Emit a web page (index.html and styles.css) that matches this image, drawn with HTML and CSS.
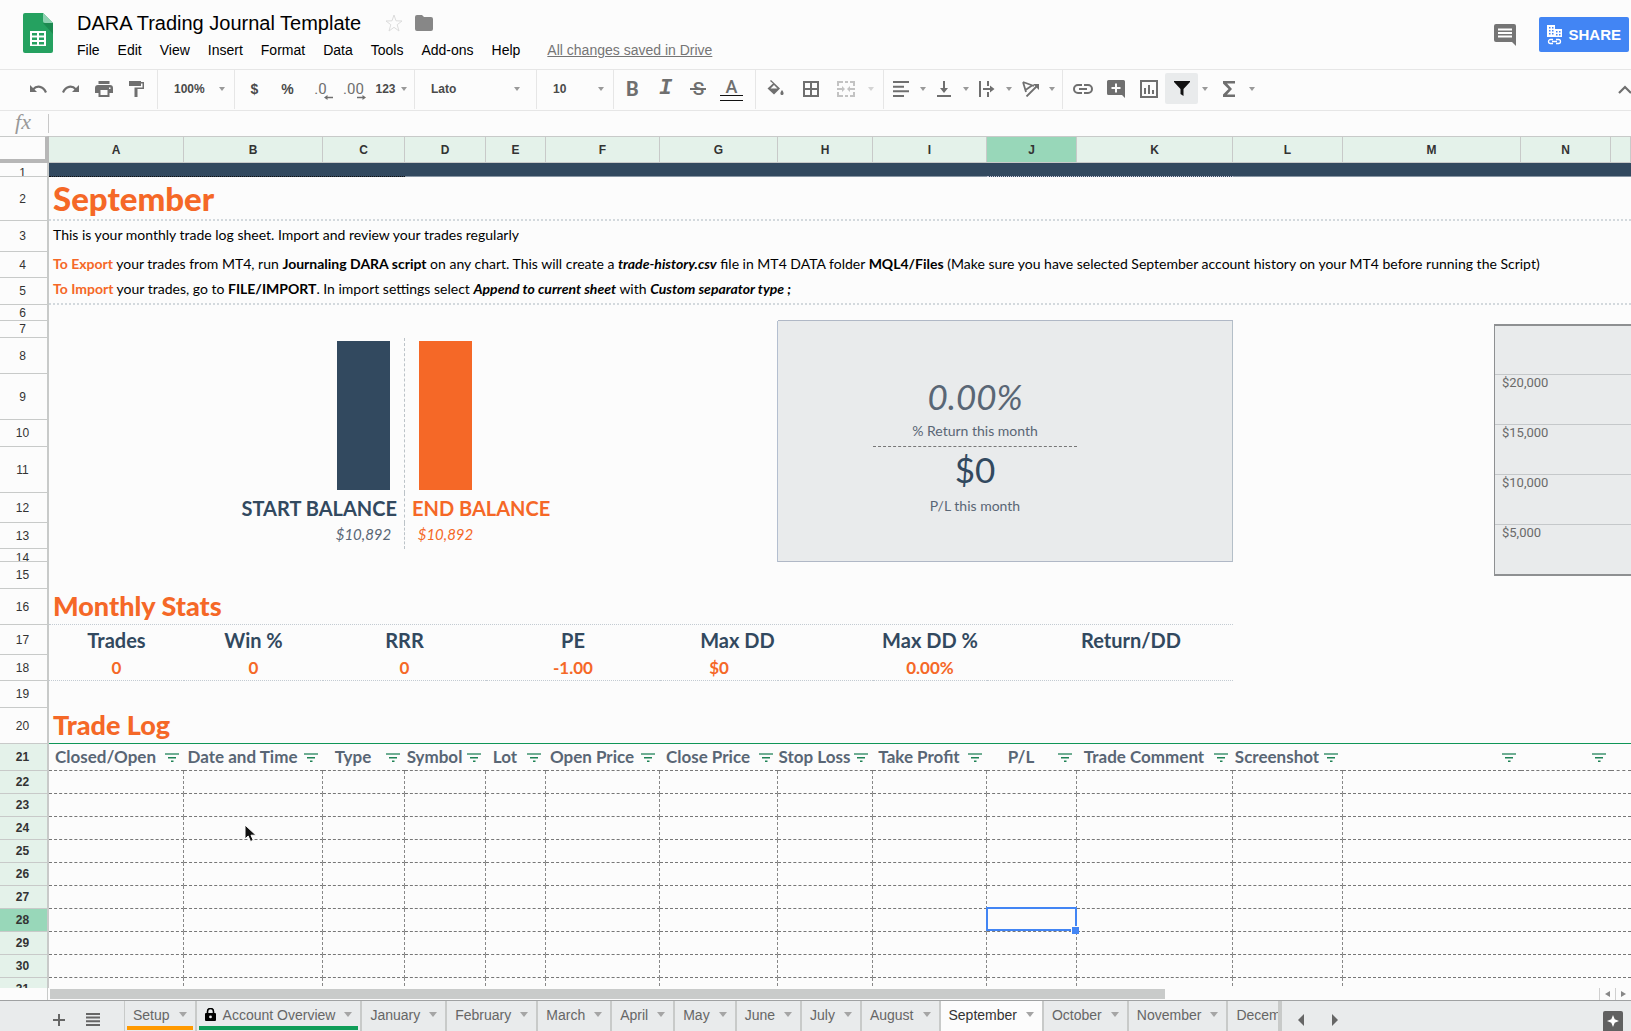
FILE: index.html
```html
<!DOCTYPE html>
<html lang="en">
<head>
  <meta charset="UTF-8">
  <title>DARA Trading Journal Template</title>
  <link rel="stylesheet" href="styles.css">
</head>
<body>
  <svg class="sprite" width="0" height="0" aria-hidden="true">
    <symbol id="i-filter" viewBox="0 0 14 10"><path d="M0 0h14v2H0z" fill="#6fae93"/><path d="M3 4h8v1.500H3zM6 7.500h2.500v1.500H6z" fill="#1f8255"/></symbol>
  </svg>

  <header class="header">
    <svg class="logo" width="30" height="40" viewBox="0 0 30 40">
      <path d="M2 0h18l10 10v28a2 2 0 0 1-2 2H2a2 2 0 0 1-2-2V2a2 2 0 0 1 2-2z" fill="#25a160"/>
      <path d="M20 10h10v11z" fill="#1c8a50"/>
      <path d="M20 0l10 10H22a2 2 0 0 1-2-2z" fill="#8ed1b1"/>
      <path d="M7 18h16v15H7z" fill="#fff"/>
      <path d="M9 20h5v2.500H9zM16 20h5v2.500h-5zM9 24.500h5v2.500H9zM16 24.500h5v2.500h-5zM9 29h5v2.500H9zM16 29h5v2.500h-5z" fill="#25a160"/>
    </svg>
    <div class="doc">
      <div class="doc-title">
        <h1>DARA Trading Journal Template</h1>
        <button class="icon-btn" aria-label="Star"><svg width="18" height="18" viewBox="0 0 18 18"><path d="M9 1l2 5.800 6 .2-4.800 3.700L14 17l-5-3.700L4 17l1.800-6.300L1 7l6-.2z" fill="none" stroke="#dcdcdc"/></svg></button>
        <button class="icon-btn" aria-label="Move to folder"><svg width="18" height="16" viewBox="0 0 18 16"><path d="M2 0h5l2 2h7a2 2 0 0 1 2 2v10a2 2 0 0 1-2 2H2a2 2 0 0 1-2-2V2a2 2 0 0 1 2-2z" fill="#878787"/></svg></button>
      </div>
      <nav class="menu">
        <button>File</button>
        <button>Edit</button>
        <button>View</button>
        <button>Insert</button>
        <button>Format</button>
        <button>Data</button>
        <button>Tools</button>
        <button>Add-ons</button>
        <button>Help</button>
        <a href="#" class="save-status">All changes saved in Drive</a>
      </nav>
    </div>
    <div class="header-actions">
      <button class="icon-btn" aria-label="Comments"><svg width="22" height="22" viewBox="0 0 22 22"><path d="M2 0h18a2 2 0 0 1 2 2v20l-4-4H2a2 2 0 0 1-2-2V2a2 2 0 0 1 2-2z" fill="#757575"/><path d="M4 4.500h14v2H4zM4 8h14v2H4zM4 11.500h14v2H4z" fill="#fff"/></svg></button>
      <button class="share-btn">
        <svg width="15" height="20" viewBox="0 0 15 20"><path d="M0 0h8v4h7v8H0z" fill="#fff"/><path d="M2 2h1.500v1.500H2zM5 2h1.500v1.500H5zM2 5h1.500v1.500H2zM5 5h1.500v1.500H5zM2 8h1.500v1.500H2zM5 8h1.500v1.500H5zM9 6h1.500v1.500H9zM12 6h1.500v1.500H12zM9 9h1.500v1.500H9zM12 9h1.500v1.500H12z" fill="#4285f4"/><path d="M6 14.500H3.500a2 2 0 0 0 0 4H6M9 14.500h2.500a2 2 0 0 1 0 4H9M5 16.500h5" fill="none" stroke="#fff" stroke-width="1.300"/></svg>
        SHARE
      </button>
    </div>
  </header>

  <div class="toolbar">
    <div class="tool-group tool-group-first">
      <button class="tool" aria-label="Undo"><svg width="18" height="10" viewBox="0 0 18 10"><path d="M1 1v7h7z"/><path d="M4 5.500C8 1 14 2 17 8.500" fill="none" stroke="currentColor" stroke-width="2.200"/></svg></button>
      <button class="tool" aria-label="Redo"><svg width="18" height="10" viewBox="0 0 18 10"><path d="M17 1v7h-7z"/><path d="M14 5.500C10 1 4 2 1 8.500" fill="none" stroke="currentColor" stroke-width="2.200"/></svg></button>
      <button class="tool" aria-label="Print"><svg width="18" height="16" viewBox="0 0 18 16"><path d="M3.500 0h11v3h-11zM3 4h12a3 3 0 0 1 3 3v5h-3.500v4h-11v-4H0V7a3 3 0 0 1 3-3zm2.500 5v5h7V9zM14 6.500v1.500h1.500V6.500z" fill-rule="evenodd"/></svg></button>
      <button class="tool" aria-label="Paint format"><svg width="16" height="16" viewBox="0 0 16 16"><path d="M0 0h12v5H0zM12 1h3v7H8.500v8h-3V6.500h8v-4H12z"/></svg></button>
    </div>
    <div class="tool-group">
      <label class="picker picker-zoom"><select aria-label="Zoom"><option>100%</option></select></label>
    </div>
    <div class="tool-group tool-group-number">
      <button class="tool tool-text">$</button>
      <button class="tool tool-text">%</button>
      <button class="tool tool-decimal">.0<svg width="9" height="5" viewBox="0 0 9 5"><path d="M0 2.500L3.500 0v1.700H9v1.600H3.500V5z"/></svg></button>
      <button class="tool tool-decimal">.00<svg width="9" height="5" viewBox="0 0 9 5"><path d="M9 2.500L5.500 0v1.700H0v1.600h5.500V5z"/></svg></button>
      <button class="tool tool-format">123<span class="caret"></span></button>
    </div>
    <div class="tool-group">
      <label class="picker picker-font"><select aria-label="Font"><option>Lato</option></select></label>
    </div>
    <div class="tool-group">
      <label class="picker picker-size"><select aria-label="Font size"><option>10</option></select></label>
    </div>
    <div class="tool-group tool-group-text">
      <button class="tool tool-bold" aria-label="Bold">B</button>
      <button class="tool tool-italic" aria-label="Italic">I</button>
      <button class="tool tool-strike" aria-label="Strikethrough">S</button>
      <button class="tool tool-color" aria-label="Text color">A</button>
    </div>
    <div class="tool-group tool-group-cell">
      <button class="tool" aria-label="Fill color"><svg width="17" height="17" viewBox="0 0 17 17"><path d="M4 0l9 8.500-6 6-6.500-6L6 3.500 3 1zM7 5L3.500 8.500h7zM15 10c3 4 1 5 0 5s-3-1 0-5z" fill-rule="evenodd"/></svg></button>
      <button class="tool" aria-label="Borders"><svg width="16" height="16" viewBox="0 0 16 16"><path d="M1 1h14v14H1zM8 1v14M1 8h14" fill="none" stroke="currentColor" stroke-width="2"/></svg></button>
      <button class="tool tool-off" aria-label="Merge cells" disabled><svg width="18" height="16" viewBox="0 0 18 16"><path d="M1 5V1h5M8 1h3M13 1h4v4M1 11v4h5M8 15h3M13 15h4v-4M0 8h6M18 8h-6" fill="none" stroke="currentColor" stroke-width="2"/><path d="M5 5l3 3-3 3zM13 5l-3 3 3 3z"/></svg></button>
      <span class="tool-caret tool-off"><span class="caret"></span></span>
    </div>
    <div class="tool-group tool-group-align">
      <button class="tool" aria-label="Horizontal align"><svg width="16" height="16" viewBox="0 0 16 16"><path d="M0 0h16v2H0zM0 4.700h11v2H0zM0 9.300h16v2H0zM0 14h11v2H0z"/></svg></button>
      <span class="tool-caret"><span class="caret"></span></span>
      <button class="tool" aria-label="Vertical align"><svg width="14" height="16" viewBox="0 0 14 16"><path d="M6 0h2v7h3l-4 5-4-5h3zM0 14h14v2H0z"/></svg></button>
      <span class="tool-caret"><span class="caret"></span></span>
      <button class="tool" aria-label="Text wrapping"><svg width="16" height="16" viewBox="0 0 16 16"><path d="M0 0h2v16H0zM8 0h2v5H8zM8 11h2v5H8zM4 7h7V4.500L15.500 8 11 11.500V9H4z"/></svg></button>
      <span class="tool-caret"><span class="caret"></span></span>
      <button class="tool" aria-label="Text rotation"><svg width="17" height="16" viewBox="0 0 17 16"><path d="M1 1l11 4M1 1l3 10M10 4.500L3.500 9M4.500 15.500L15 5" fill="none" stroke="currentColor" stroke-width="1.800"/><path d="M17 3v6l-6-6z"/></svg></button>
      <span class="tool-caret"><span class="caret"></span></span>
    </div>
    <div class="tool-group tool-group-insert">
      <button class="tool" aria-label="Insert link"><svg width="20" height="10" viewBox="0 0 20 10"><path d="M9 1H5a4 4 0 0 0 0 8h4M11 1h4a4 4 0 0 1 0 8h-4M6 5h8" fill="none" stroke="currentColor" stroke-width="2"/></svg></button>
      <button class="tool" aria-label="Insert comment"><svg width="18" height="18" viewBox="0 0 18 18"><path d="M1.500 0h15A1.500 1.500 0 0 1 18 1.500V18l-3-3H1.500A1.500 1.500 0 0 1 0 13.500v-12A1.500 1.500 0 0 1 1.500 0zM8 3.500V7H4.500v2H8v3.500h2V9h3.500V7H10V3.500z" fill-rule="evenodd"/></svg></button>
      <button class="tool" aria-label="Insert chart"><svg width="18" height="18" viewBox="0 0 18 18"><path d="M1 1h16v16H1z" fill="none" stroke="currentColor" stroke-width="2"/><path d="M4 8h2v6H4zM8 5h2v9H8zM12 10h2v4h-2z"/></svg></button>
      <button class="tool tool-active" aria-label="Filter"><svg width="16" height="15" viewBox="0 0 16 15"><path d="M0 0h16v1L9.500 8v7L6.500 13V8L0 1z"/></svg></button>
      <span class="tool-caret"><span class="caret"></span></span>
      <button class="tool" aria-label="Functions"><svg width="12" height="16" viewBox="0 0 12 16"><path d="M0 0h12v2.500H4L9 8l-5 5.500h8V16H0v-2.500L5.500 8 0 2.500z"/></svg></button>
      <span class="tool-caret"><span class="caret"></span></span>
    </div>
    <button class="tool tool-collapse" aria-label="Hide menus"><svg width="14" height="9" viewBox="0 0 14 9"><path d="M1 8l6-6 6 6" fill="none" stroke="currentColor" stroke-width="2.200"/></svg></button>
  </div>

  <div class="formula-bar">
    <label for="formula">fx</label>
    <input type="text" id="formula">
  </div>

  <main class="sheet">
    <table class="grid">
      <colgroup>
        <col class="w-head"><col class="w-a"><col class="w-b"><col class="w-c"><col class="w-d"><col class="w-e"><col class="w-f"><col class="w-g"><col class="w-h"><col class="w-i"><col class="w-j"><col class="w-k"><col class="w-l"><col class="w-m"><col class="w-n"><col>
      </colgroup>
      <thead>
        <tr>
          <th class="corner"></th>
          <th>A</th><th>B</th><th>C</th><th>D</th><th>E</th><th>F</th><th>G</th><th>H</th><th>I</th><th class="current">J</th><th>K</th><th>L</th><th>M</th><th>N</th><th></th>
        </tr>
      </thead>
      <tbody>
        <tr class="h-14 banner"><th><span>1</span></th><td class="dots-dark" colspan="3"></td><td colspan="6"></td><td class="dots-light" colspan="2"></td><td colspan="4"></td></tr>
        <tr class="h-44"><th>2</th><td class="title dotted-bottom" colspan="15">September</td></tr>
        <tr class="h-31"><th>3</th><td class="note" colspan="15">This is your monthly trade log sheet. Import and review your trades regularly</td></tr>
        <tr class="h-26"><th>4</th><td class="note" colspan="15"><b class="orange">To Export</b> your trades from MT4, run <b>Journaling DARA script</b> on any chart. This will create a <b><i>trade-history.csv</i></b> file in MT4 DATA folder <b>MQL4/Files</b> (Make sure you have selected September account history on your MT4 before running the Script)</td></tr>
        <tr class="h-27"><th>5</th><td class="note dotted-bottom" colspan="15"><b class="orange">To Import</b> your trades, go to <b>FILE/IMPORT</b>. In import settings select <b><i>Append to current sheet</i></b> with <b><i>Custom separator type ;</i></b></td></tr>
        <tr class="h-16"><th>6</th><td colspan="7"></td><td class="card-edge" colspan="4"></td><td colspan="4"></td></tr>
        <tr class="h-17"><th>7</th><td class="card-left" colspan="7"></td><td class="card" colspan="4"></td><td colspan="4"></td></tr>
        <tr class="h-36"><th>8</th><td colspan="2" rowspan="4"></td><td class="bar-cell split" rowspan="4"><div class="bar bar-start"></div></td><td class="bar-cell" rowspan="4"><div class="bar bar-end"></div></td><td class="card-left" colspan="3"></td><td class="card" colspan="4"></td><td colspan="4"></td></tr>
        <tr class="h-46"><th>9</th><td class="card-left" colspan="3"></td><td class="card-fill"></td><td class="card-fill figure figure-pct" colspan="2">0.00%</td><td class="card"></td><td colspan="4"></td></tr>
        <tr class="h-27"><th>10</th><td class="card-left" colspan="3"></td><td class="card-fill"></td><td class="card-fill caption caption-line" colspan="2">% Return this month</td><td class="card"></td><td colspan="4"></td></tr>
        <tr class="h-46"><th>11</th><td class="card-left" colspan="3"></td><td class="card-fill"></td><td class="card-fill figure" colspan="2">$0</td><td class="card"></td><td colspan="4"></td></tr>
        <tr class="h-30"><th>12</th><td class="balance balance-start split" colspan="3">START BALANCE</td><td class="balance balance-end" colspan="3">END BALANCE</td><td class="card-left"></td><td class="card-fill"></td><td class="card-fill caption" colspan="2">P/L this month</td><td class="card"></td><td colspan="4"></td></tr>
        <tr class="h-26"><th>13</th><td colspan="2"></td><td class="amount split">$10,892</td><td class="amount orange">$10,892</td><td class="card-left" colspan="3"></td><td class="card" colspan="4"></td><td colspan="4"></td></tr>
        <tr class="h-13"><th><span>14</span></th><td class="card-left" colspan="7"></td><td class="card card-last" colspan="4"></td><td colspan="4"></td></tr>
        <tr class="h-27"><th>15</th><td colspan="15"></td></tr>
        <tr class="h-36"><th>16</th><td class="section stats-line" colspan="11">Monthly Stats</td><td colspan="4"></td></tr>
        <tr class="h-30 stat-names"><th>17</th><td>Trades</td><td>Win %</td><td colspan="2">RRR</td><td colspan="2">PE</td><td class="stat-indent">Max DD</td><td></td><td>Max DD %</td><td></td><td class="stat-left">Return/DD</td><td colspan="4"></td></tr>
        <tr class="h-26 stat-values"><th>18</th><td class="stats-line">0</td><td class="stats-line">0</td><td class="stats-line" colspan="2">0</td><td class="stats-line" colspan="2">-1.00</td><td class="stats-line">$0</td><td class="stats-line"></td><td class="stats-line">0.00%</td><td class="stats-line" colspan="2"></td><td colspan="4"></td></tr>
        <tr class="h-27"><th>19</th><td colspan="15"></td></tr>
        <tr class="h-36"><th>20</th><td class="section log-line" colspan="15">Trade Log</td></tr>
        <tr class="h-27 log-head">
          <th>21</th>
          <td><div>Closed/Open<button aria-label="Filter"><svg><use href="#i-filter"/></svg></button></div></td>
          <td><div>Date and Time<button aria-label="Filter"><svg><use href="#i-filter"/></svg></button></div></td>
          <td><div>Type<button aria-label="Filter"><svg><use href="#i-filter"/></svg></button></div></td>
          <td><div>Symbol<button aria-label="Filter"><svg><use href="#i-filter"/></svg></button></div></td>
          <td><div>Lot<button aria-label="Filter"><svg><use href="#i-filter"/></svg></button></div></td>
          <td><div>Open Price<button aria-label="Filter"><svg><use href="#i-filter"/></svg></button></div></td>
          <td><div>Close Price<button aria-label="Filter"><svg><use href="#i-filter"/></svg></button></div></td>
          <td><div>Stop Loss<button aria-label="Filter"><svg><use href="#i-filter"/></svg></button></div></td>
          <td><div>Take Profit<button aria-label="Filter"><svg><use href="#i-filter"/></svg></button></div></td>
          <td><div>P/L<button aria-label="Filter"><svg><use href="#i-filter"/></svg></button></div></td>
          <td><div>Trade Comment<button aria-label="Filter"><svg><use href="#i-filter"/></svg></button></div></td>
          <td><div>Screenshot<button aria-label="Filter"><svg><use href="#i-filter"/></svg></button></div></td>
          <td><div><button aria-label="Filter"><svg><use href="#i-filter"/></svg></button></div></td>
          <td><div><button aria-label="Filter"><svg><use href="#i-filter"/></svg></button></div></td>
          <td></td>
        </tr>
        <tr class="log"><th>22</th><td></td><td></td><td></td><td></td><td></td><td></td><td></td><td></td><td></td><td></td><td></td><td></td><td colspan="3"></td></tr>
        <tr class="log"><th>23</th><td></td><td></td><td></td><td></td><td></td><td></td><td></td><td></td><td></td><td></td><td></td><td></td><td colspan="3"></td></tr>
        <tr class="log"><th>24</th><td></td><td></td><td></td><td></td><td></td><td></td><td></td><td></td><td></td><td></td><td></td><td></td><td colspan="3"></td></tr>
        <tr class="log"><th>25</th><td></td><td></td><td></td><td></td><td></td><td></td><td></td><td></td><td></td><td></td><td></td><td></td><td colspan="3"></td></tr>
        <tr class="log"><th>26</th><td></td><td></td><td></td><td></td><td></td><td></td><td></td><td></td><td></td><td></td><td></td><td></td><td colspan="3"></td></tr>
        <tr class="log"><th>27</th><td></td><td></td><td></td><td></td><td></td><td></td><td></td><td></td><td></td><td></td><td></td><td></td><td colspan="3"></td></tr>
        <tr class="log"><th class="current">28</th><td></td><td></td><td></td><td></td><td></td><td></td><td></td><td></td><td></td><td class="selected"><div class="selection"></div></td><td></td><td></td><td colspan="3"></td></tr>
        <tr class="log"><th>29</th><td></td><td></td><td></td><td></td><td></td><td></td><td></td><td></td><td></td><td></td><td></td><td></td><td colspan="3"></td></tr>
        <tr class="log"><th>30</th><td></td><td></td><td></td><td></td><td></td><td></td><td></td><td></td><td></td><td></td><td></td><td></td><td colspan="3"></td></tr>
        <tr class="log"><th>31</th><td></td><td></td><td></td><td></td><td></td><td></td><td></td><td></td><td></td><td></td><td></td><td></td><td colspan="3"></td></tr>
      </tbody>
    </table>

    <!-- equity chart floats over the cells -->
    <div class="chart">
      <div class="chart-band"></div>
      <div class="chart-band">$20,000</div>
      <div class="chart-band">$15,000</div>
      <div class="chart-band">$10,000</div>
      <div class="chart-band">$5,000</div>
    </div>

    <svg class="pointer" width="13" height="19" viewBox="0 0 13 19"><path d="M1 1v14l3.200-3 2.300 5.500 2.800-1.200-2.300-5.100H12z" fill="#111" stroke="#fff"/></svg>
  </main>

  <div class="scroll-row">
    <div class="scroll-track"><div class="scroll-thumb"></div></div>
    <button class="scroll-btn" aria-label="Scroll left"><svg width="5" height="6" viewBox="0 0 5 6"><path d="M5 0v6L0 3z"/></svg></button>
    <button class="scroll-btn" aria-label="Scroll right"><svg width="5" height="6" viewBox="0 0 5 6"><path d="M0 0v6l5-3z"/></svg></button>
  </div>

  <footer class="footer">
    <div class="sheet-tools">
      <button class="icon-btn" aria-label="Add sheet"><svg width="12" height="12" viewBox="0 0 12 12"><path d="M5 0h2v5h5v2H7v5H5V7H0V5h5z"/></svg></button>
      <button class="icon-btn" aria-label="All sheets"><svg width="14" height="13" viewBox="0 0 14 13"><path d="M0 0h14v2H0zM0 3.600h14v2H0zM0 7.300h14v2H0zM0 11h14v2H0z"/></svg></button>
    </div>
    <div class="tabs">
      <button class="tab tab-orange">Setup<span class="caret"></span></button>
      <button class="tab tab-green"><svg width="11" height="13" viewBox="0 0 11 13"><path d="M2.500 6V3.500a3 3 0 0 1 6 0V6" fill="none" stroke="#000" stroke-width="1.600"/><path d="M1 5h9a1 1 0 0 1 1 1v6a1 1 0 0 1-1 1H1a1 1 0 0 1-1-1V6a1 1 0 0 1 1-1zm4.500 2.500a1.400 1.400 0 1 0 0 2.800 1.400 1.400 0 0 0 0-2.800z" fill-rule="evenodd"/></svg>Account Overview<span class="caret"></span></button>
      <button class="tab">January<span class="caret"></span></button>
      <button class="tab">February<span class="caret"></span></button>
      <button class="tab">March<span class="caret"></span></button>
      <button class="tab">April<span class="caret"></span></button>
      <button class="tab">May<span class="caret"></span></button>
      <button class="tab">June<span class="caret"></span></button>
      <button class="tab">July<span class="caret"></span></button>
      <button class="tab">August<span class="caret"></span></button>
      <button class="tab tab-current">September<span class="caret"></span></button>
      <button class="tab">October<span class="caret"></span></button>
      <button class="tab">November<span class="caret"></span></button>
      <button class="tab">December<span class="caret"></span></button>
    </div>
    <div class="tab-scroll">
      <button class="icon-btn" aria-label="Previous tabs"><svg width="6" height="12" viewBox="0 0 6 12"><path d="M6 0v12L0 6z"/></svg></button>
      <button class="icon-btn" aria-label="Next tabs"><svg width="6" height="12" viewBox="0 0 6 12"><path d="M0 0v12l6-6z"/></svg></button>
    </div>
    <button class="explore" aria-label="Explore"><svg width="20" height="20" viewBox="0 0 20 20"><rect width="20" height="22" rx="2" fill="#616161"/><path d="M10 4l1.700 4.300L16 10l-4.300 1.700L10 16l-1.700-4.300L4 10l4.300-1.700z" fill="#fff"/></svg></button>
  </footer>
</body>
</html>
```

FILE: styles.css
```css
* {
  box-sizing: border-box;
}

body {
  margin: 0;
  height: 100vh;
  display: flex;
  flex-direction: column;
  overflow: hidden;
  background: #fcfcfc;
  color: #000;
  font-family: "Liberation Sans", Arial, sans-serif;
}

button {
  padding: 0;
  border: none;
  background: none;
  color: inherit;
  font: inherit;
  cursor: pointer;
}

svg {
  display: block;
  flex: none;
  fill: currentColor;
}

.sprite {
  position: absolute;
}

.orange {
  color: #f56827;
}

.caret {
  width: 0;
  border: 3px solid transparent;
  border-top: 4px solid #999;
  border-bottom: none;
}

/* header */
.header {
  display: flex;
  align-items: flex-start;
  height: 70px;
  padding: 13px 2px 0 23px;
  border-bottom: 1px solid #e6e6e6;
}

.doc {
  margin-left: 24px;
}

.doc-title {
  display: flex;
  align-items: center;
  height: 20px;
}

.doc-title h1 {
  margin: 0 24px 0 0;
  font-size: 20px;
  line-height: 20px;
  font-weight: normal;
}

.doc-title .icon-btn {
  margin-right: 12px;
}

.menu {
  display: flex;
  gap: 18px;
  margin-top: 9px;
  font-size: 14px;
  line-height: 16px;
}

.save-status {
  margin-left: 9px;
  color: #757575;
}

.header-actions {
  display: flex;
  align-items: center;
  gap: 23px;
  margin: 4px 0 0 auto;
}

.share-btn {
  display: flex;
  align-items: center;
  gap: 6px;
  height: 35px;
  padding: 0 8px;
  border-radius: 2px;
  background: #4285f4;
  color: #fff;
  font-size: 15px;
  font-weight: bold;
}

/* toolbar */
.toolbar {
  display: flex;
  height: 41px;
  overflow: hidden;
  border-bottom: 1px solid #e6e6e6;
  color: #6f6f6f;
}

.tool-group {
  display: flex;
  align-items: center;
  margin-bottom: 1px;
  padding: 0 5px 2px 2px;
  border-right: 1px solid #e6e6e6;
}

.tool-group-first {
  padding-left: 21px;
  padding-right: 4px;
}

.tool-group-number {
  padding-left: 3px;
  padding-right: 2px;
}

.tool-group-text {
  padding-right: 7px;
}

.tool-group-cell {
  padding-left: 3px;
  gap: 2px;
}

.tool-group-align {
  padding-right: 4px;
}

.tool-group-insert {
  padding-left: 3px;
  border-right: none;
}

.tool {
  position: relative;
  display: flex;
  align-items: center;
  justify-content: center;
  width: 33px;
  height: 31px;
}

.tool-group-align .tool {
  width: 30px;
}

.tool-group-align .tool-caret {
  width: 13px;
}

.tool-text {
  color: #4a4a4a;
  font-size: 14px;
  font-weight: bold;
}

.tool-decimal {
  font-family: Roboto, "Liberation Sans", sans-serif;
  font-size: 15px;
}

.tool-decimal svg {
  position: absolute;
  right: 4px;
  bottom: 4px;
}

.tool-format {
  width: 42px;
  gap: 5px;
  color: #4a4a4a;
  font-size: 12px;
  font-weight: bold;
}

.tool-bold {
  font: bold 20px Roboto, sans-serif;
}

.tool-italic {
  font: italic bold 22px "Liberation Mono", monospace;
}

.tool-strike {
  font: 500 19px Roboto, sans-serif;
}

.tool-strike::after {
  content: "";
  position: absolute;
  left: 8px;
  right: 9px;
  top: 15px;
  height: 2px;
  background: #6f6f6f;
}

.tool-color {
  padding-bottom: 5px;
  font: 500 18px Roboto, sans-serif;
}

.tool-color::after {
  content: "";
  position: absolute;
  left: 5px;
  right: 5px;
  bottom: 3px;
  height: 4px;
  border: solid #111;
  border-width: 1px 0;
}

.tool-caret {
  display: flex;
  justify-content: center;
  width: 14px;
}

.tool-off {
  opacity: 0.4;
}

.tool-active {
  background: #e9ebec;
  color: #111;
  border-radius: 2px;
}

.tool-collapse {
  width: 24px;
  height: 38px;
  margin: 0 -6px 0 auto;
}

.picker {
  display: flex;
  align-items: center;
  margin: 0 -5px 0 -2px;
  padding-right: 9px;
}

.picker::after {
  content: "";
  border: 3px solid transparent;
  border-top: 4px solid #999;
  border-bottom: none;
}

.picker select {
  flex: 1;
  min-width: 0;
  padding: 0 0 0 16px;
  appearance: none;
  border: none;
  background: none;
  color: #4a4a4a;
  font: bold 12px "Liberation Sans", Arial, sans-serif;
}

.picker-zoom,
.picker-size {
  width: 76px;
}

.picker-font {
  width: 121px;
  padding-right: 16px;
}

/* formula bar */
.formula-bar {
  display: flex;
  align-items: center;
  height: 25px;
}

.formula-bar label {
  width: 48px;
  padding: 0 2px 3px 0;
  text-align: center;
  color: #999;
  font: italic 22px/22px "Liberation Serif", serif;
}

.formula-bar input {
  flex: 1;
  height: 19px;
  border: none;
  border-left: 1px solid #c8c8c8;
  background: none;
}

/* sheet */
.sheet {
  position: relative;
  flex: 1;
  min-height: 0;
  overflow: hidden;
}

.grid {
  width: 100%;
  table-layout: fixed;
  border-collapse: separate;
  border-spacing: 0;
}

.w-head { width: 49px; }
.w-a { width: 135px; }
.w-b { width: 139px; }
.w-c { width: 82px; }
.w-d { width: 81px; }
.w-e { width: 60px; }
.w-f, .w-i { width: 114px; }
.w-g { width: 118px; }
.w-h { width: 95px; }
.w-j, .w-n { width: 90px; }
.w-k { width: 156px; }
.w-l { width: 110px; }
.w-m { width: 178px; }

.grid td,
.grid th {
  padding: 0;
  white-space: nowrap;
}

.grid thead th {
  height: 27px;
  border: solid #c8cac9;
  border-width: 1px 1px 1px 0;
  background: #e4f2ea;
  color: #333;
  font-size: 12px;
}

.grid thead .corner {
  border-right: 4px solid #b7b7b7;
  border-bottom: 4px solid #b7b7b7;
  background: #fcfcfc;
}

.grid tbody th {
  padding-right: 2px;
  border-right: 2px solid #c8cac9;
  border-bottom: 1px solid #c8cac9;
  color: #333;
  font-size: 12px;
  line-height: 12px;
  font-weight: normal;
  vertical-align: middle;
}

/* rows too short for their number cut it off at the bottom */
.grid tbody th span {
  display: block;
  height: 12px;
  line-height: 18px;
  overflow: hidden;
}

.grid tbody .log-head th,
.grid tbody .log th {
  background: #e4f2ea;
  font-weight: bold;
}

.grid thead .current,
.grid tbody .log .current {
  background: #98d7b9;
}

.h-13 { height: 13px; }
.h-14 { height: 14px; }
.h-16 { height: 16px; }
.h-17 { height: 17px; }
.h-26 { height: 26px; }
.h-27 { height: 27px; }
.h-30 { height: 30px; }
.h-31 { height: 31px; }
.h-36 { height: 36px; }
.h-44 { height: 44px; }
.h-46 { height: 46px; }

.banner td {
  background: #32495f;
  border-bottom: 1px solid #8795a3;
}

.banner .dots-dark {
  border-bottom: 1px dotted #111;
}

.banner .dots-light {
  border-bottom: 1px dotted #ccd;
}

.dotted-bottom {
  border-bottom: 2px dotted #d3d9dd;
}

.grid .title,
.grid .section {
  padding-left: 4px;
  color: #f56827;
  font-family: Lato, sans-serif;
  font-weight: 900;
}

.title {
  font-size: 33px;
  line-height: 36px;
}

.grid .section {
  padding-bottom: 2px;
  font-size: 27px;
  line-height: 32px;
}

.grid .note {
  padding: 0 0 3px 4px;
  font-family: Lato, sans-serif;
  font-size: 14px;
  line-height: 18px;
}

/* balance bars */
.split {
  border-right: 1px dashed #bcc3c8;
}

.bar {
  width: 53px;
  height: 149px;
  margin: 0 auto;
}

.bar-start {
  background: #32495f;
}

.bar-end {
  background: #f56827;
}

.balance {
  font-family: Lato, sans-serif;
  font-size: 20px;
  line-height: 24px;
  font-weight: bold;
}

.grid .balance-start {
  padding-right: 7px;
  text-align: right;
  color: #32495f;
}

.grid .balance-end {
  padding-left: 7px;
  color: #f56827;
}

.grid .amount {
  padding-bottom: 4px;
  text-align: center;
  font: italic 15px/18px Lato, sans-serif;
}

.amount.split {
  color: #596675;
}

/* monthly return card */
.card,
.card-fill {
  background: #e9ebec;
}

.card {
  border-right: 1px solid #b4bfc8;
}

.card-edge,
.card-last {
  border-bottom: 1px solid #b0b8c6;
}

.card-left {
  border-right: 1px solid #b4bfd0;
}

.grid .figure {
  padding-bottom: 2px;
  text-align: center;
  color: #32495f;
  font: 35px/40px Lato, sans-serif;
}

.grid .figure-pct {
  color: #596675;
  font-style: italic;
}

.grid .caption {
  padding-bottom: 4px;
  text-align: center;
  color: #596675;
  font: 14px/18px Lato, sans-serif;
}

.caption-line {
  border-bottom: 1px dashed #777;
}

/* stats */
.stats-line {
  border-bottom: 1px dotted #c3cbd2;
}

.stat-names td {
  text-align: center;
  color: #32495f;
  font: bold 20px/24px Lato, sans-serif;
}

.grid .stat-indent {
  padding-left: 37px;
}

.grid .stat-left {
  padding-left: 4px;
  text-align: left;
}

.stat-values td {
  text-align: center;
  color: #f56827;
  font: bold 17px/22px Lato, sans-serif;
}

/* trade log */
.log-line {
  border-bottom: 1px solid #0f9657;
}

.log-head td {
  border-bottom: 1px dashed #777;
  color: #596675;
  font: bold 17px/22px Lato, sans-serif;
}

.log-head td div {
  display: flex;
  align-items: center;
  justify-content: center;
  height: 22px;
  padding-right: 22px;
  position: relative;
}

.log-head button {
  position: absolute;
  right: 5px;
  top: 7px;
}

.log-head svg {
  width: 14px;
  height: 10px;
}

.log {
  height: 23px;
}

.log td {
  border-right: 1px dashed #888;
  border-bottom: 1px dashed #777;
}

.log td:last-child {
  border-right: none;
}

.selected {
  position: relative;
}

.selection {
  position: absolute;
  inset: -2px -1px 0 -1px;
  border: 2px solid #4285f4;
}

.selection::after {
  content: "";
  position: absolute;
  right: -4px;
  bottom: -5px;
  width: 7px;
  height: 7px;
  border: solid #fcfcfc;
  border-width: 1px 0 0 1px;
  background: #4285f4;
}

.chart {
  position: absolute;
  top: 188px;
  left: 1494px;
  right: 0;
  border: solid #8e9092;
  border-width: 2px 0 2px 1px;
  background: #e9ebec;
}

.chart-band {
  height: 50px;
  padding: 0 7px;
  border-top: 1px solid #c5c8ca;
  color: #6a6a6a;
  font: 13px/16px Roboto, sans-serif;
}

.chart-band:first-child {
  height: 48px;
  border-top: none;
}

.pointer {
  position: absolute;
  left: 244px;
  top: 688px;
}

/* horizontal scroll */
.scroll-row {
  display: flex;
  height: 12px;
}

.scroll-track {
  flex: 1;
  margin-left: 47px;
  padding: 1px 0 1px 2px;
  border-left: 1px solid #c8cac9;
}

.scroll-thumb {
  width: 72%;
  height: 100%;
  background: #c9cbca;
}

.scroll-btn {
  display: flex;
  align-items: center;
  justify-content: center;
  width: 16px;
  border-left: 1px solid #d0d0d0;
  color: #888;
}

/* sheet tabs */
.footer {
  display: flex;
  height: 31px;
  border-top: 1px solid #9fa1a2;
  background: #e9ebec;
  color: #666;
}

.sheet-tools {
  display: flex;
  align-items: center;
  gap: 21px;
  width: 124px;
  padding: 7px 0 0 53px;
}

.tabs {
  display: flex;
  width: 71%;
  overflow: hidden;
  border-left: 1px solid #c8cac9;
  border-right: 4px solid #c8cac9;
}

.tab {
  position: relative;
  display: flex;
  flex: none;
  align-items: center;
  padding: 0 8px 3px 8px;
  border-right: 2px solid #c8cac9;
  font-size: 14px;
}

.tab svg {
  margin-right: 7px;
  color: #000;
}

.tab .caret {
  margin-left: 9px;
  border-width: 4px;
  border-top-width: 5px;
  border-top-color: #a5a5a5;
  border-bottom: none;
}

.tab-orange::after,
.tab-green::after {
  content: "";
  position: absolute;
  left: 2px;
  right: 2px;
  bottom: 1px;
  height: 4px;
  background: #ff9900;
}

.tab-green::after {
  background: #0f9d58;
}

.tab-current {
  background: #fcfcfc;
  color: #333;
}

.tab-scroll {
  display: flex;
  align-items: center;
  gap: 28px;
  padding: 7px 0 0 16px;
}

.explore {
  align-self: flex-end;
  margin: 0 8px 0 auto;
}
```
